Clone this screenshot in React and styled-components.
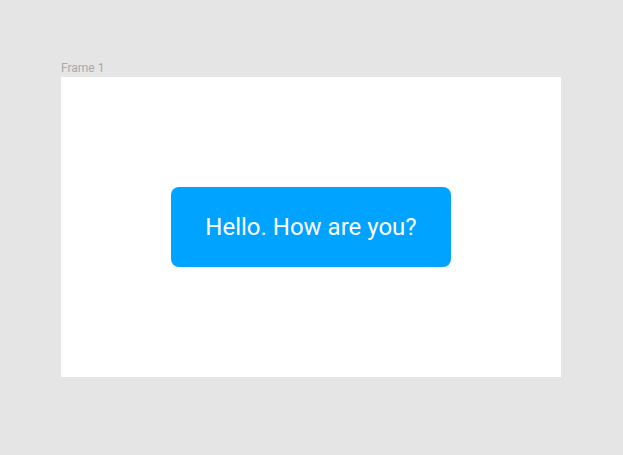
import React from 'react'
import styled, { createGlobalStyle } from 'styled-components'

const GlobalStyle = createGlobalStyle`
  html, body {
    margin: 0;
    padding: 0;
    background: #e5e5e5;
    font-family: Roboto, "Liberation Sans", sans-serif;
  }
`

const Canvas = styled.div`
  width: 623px;
  height: 455px;
  box-sizing: border-box;
  padding: 60px 0 0 61px;
  background: #e5e5e5;
`

const FrameLabel = styled.div`
  color: #a8a8a8;
  font-size: 12px;
  line-height: 17px;
`

const Frame = styled.div`
  width: 500px;
  height: 300px;
  background: #fff;
  display: flex;
  align-items: center;
  justify-content: center;
`

const Button = styled.button`
  width: 280px;
  height: 80px;
  border: none;
  border-radius: 8px;
  background: #00a3ff;
  color: #fff;
  font-family: Roboto, "Liberation Sans", sans-serif;
  font-size: 24px;
  cursor: pointer;
`

const App = () => {
  return (
    <>
      <GlobalStyle />
      <Canvas>
        <FrameLabel>Frame 1</FrameLabel>
        <Frame>
          <Button>Hello. How are you?</Button>
        </Frame>
      </Canvas>
    </>
  )
}

export default App
